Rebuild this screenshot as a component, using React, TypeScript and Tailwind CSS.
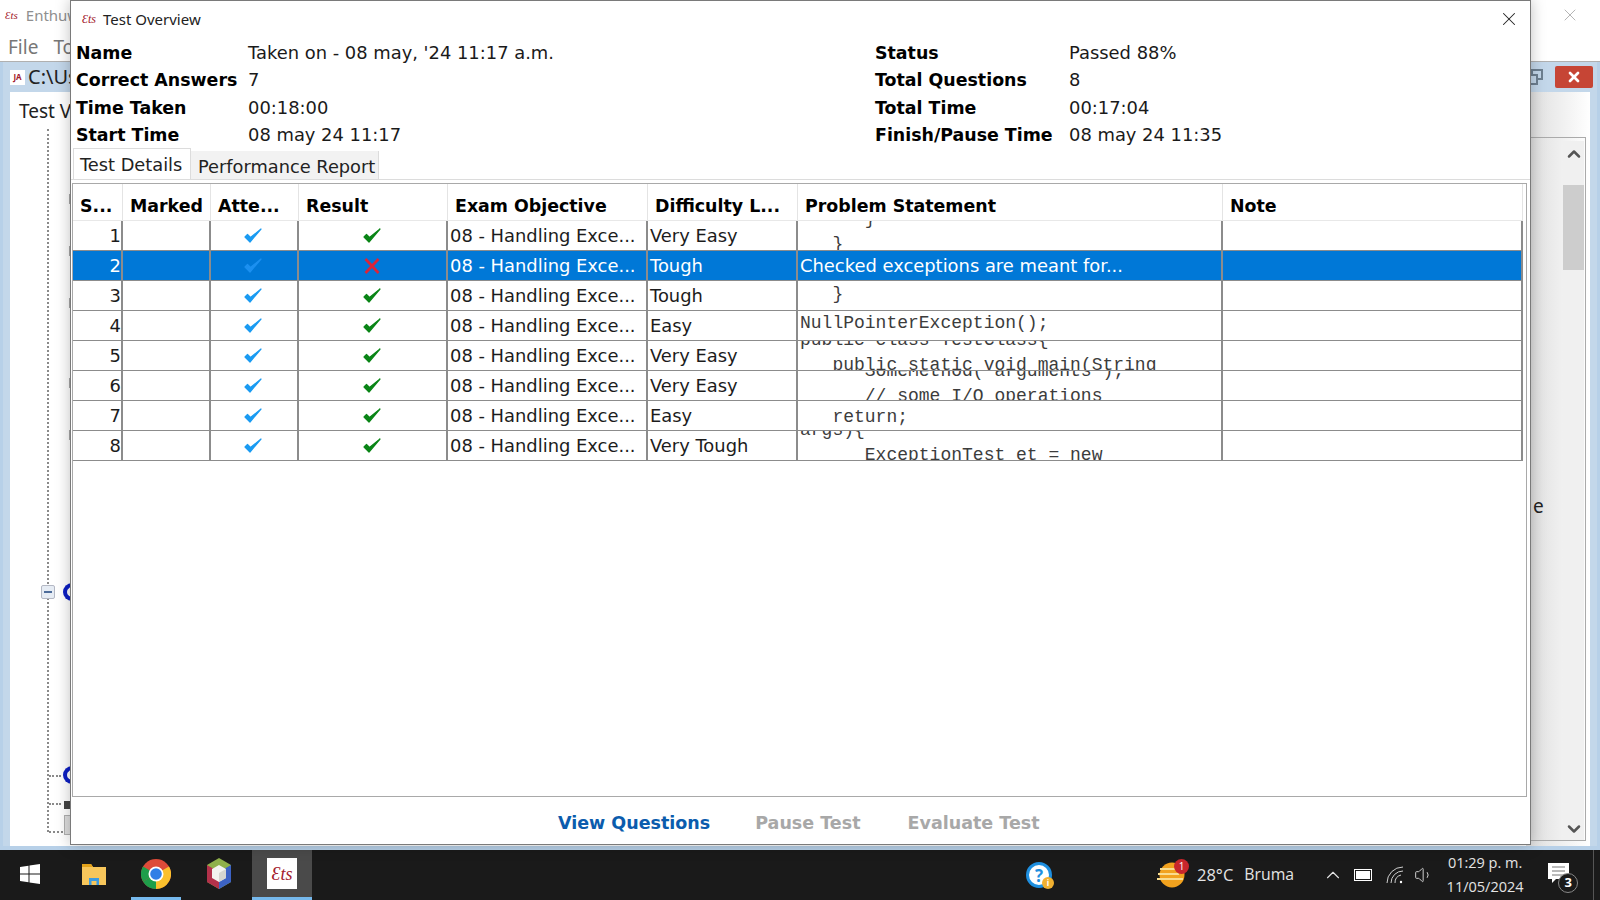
import { X, ChevronUp, ChevronDown, Volume1 } from 'lucide-react'

const COLS = 'grid grid-cols-[50px_88px_88px_149px_200px_150px_425px_300px]'

const headers = ['S...', 'Marked', 'Atte...', 'Result', 'Exam Objective', 'Difficulty L...', 'Problem Statement', 'Note']

type Row = {
  n: number
  difficulty: string
  offset: string
  code: string[]
  text?: string
  wrong?: boolean
}

const rows: Row[] = [
  { n: 1, difficulty: 'Very Easy', offset: '-mt-[14px]', code: ['      }', '   }'] },
  { n: 2, difficulty: 'Tough', offset: 'mt-0', code: [], text: 'Checked exceptions are meant for...', wrong: true },
  { n: 3, difficulty: 'Tough', offset: 'mt-[1px]', code: ['   }'] },
  { n: 4, difficulty: 'Easy', offset: 'mt-0', code: ['NullPointerException();'] },
  { n: 5, difficulty: 'Very Easy', offset: '-mt-[13px]', code: ['public class TestClass{', '   public static void main(String'] },
  { n: 6, difficulty: 'Very Easy', offset: '-mt-[12px]', code: ['      SomeMethod( arguments );', '      // some I/O operations'] },
  { n: 7, difficulty: 'Easy', offset: 'mt-[4px]', code: ['   return;'] },
  { n: 8, difficulty: 'Very Tough', offset: '-mt-[13px]', code: ['args){', '      ExceptionTest et = new'] },
]

const infoLeft = [
  ['Name', "Taken on - 08 may, '24 11:17 a.m."],
  ['Correct Answers', '7'],
  ['Time Taken', '00:18:00'],
  ['Start Time', '08 may 24 11:17'],
]

const infoRight = [
  ['Status', 'Passed 88%'],
  ['Total Questions', '8'],
  ['Total Time', '00:17:04'],
  ['Finish/Pause Time', '08 may 24 11:35'],
]

function Check({ color }: { color: string }) {
  return (
    <svg width="20" height="18" viewBox="0 0 20 18">
      <path d="M2 10 L7 15 L18 2 L7.5 10.5 L4.5 7.5 Z" fill={color} stroke={color} strokeWidth="1.2" strokeLinejoin="round" />
    </svg>
  )
}

function Cross() {
  return (
    <svg width="18" height="18" viewBox="0 0 18 18">
      <path d="M2.5 2 L15.5 16 M15.5 2 L2.5 16" stroke="#dc2438" strokeWidth="2.6" />
    </svg>
  )
}

function EtsMark({ className }: { className: string }) {
  return <span className={`font-['Liberation_Serif',serif] italic leading-none text-[#a3202c] ${className}`}>Ɛts</span>
}

function InfoBlock({ items, labelWidth }: { items: string[][]; labelWidth: string }) {
  return (
    <div className="flex flex-col">
      {items.map(([label, value]) => (
        <div key={label} className="flex h-[27.5px] items-center font-['DejaVu_Sans',sans-serif]">
          <div className={`${labelWidth} text-[17.4px] font-bold text-black`}>{label}</div>
          <div className="pt-[1px] text-[17.9px] text-[#1a1a1a]">{value}</div>
        </div>
      ))}
    </div>
  )
}

function TestTable() {
  return (
    <div className="ml-[1px] mr-[3px] h-[614px] border border-[#a9a9a9] bg-white pr-[3px] font-['DejaVu_Sans',sans-serif]">
      <div className={`${COLS} h-[37px] border-b border-[#e8e8e8]`}>
        {headers.map((h) => (
          <div key={h} className="flex items-center border-r border-[#e4e4e4] pl-[7px] pt-[8px] text-[17.4px] font-bold text-black">
            {h}
          </div>
        ))}
      </div>
      {rows.map((row) => {
        const cell = `flex items-center overflow-hidden border-r-2 border-[#8c8c8c] ${row.wrong ? 'text-white' : 'text-[#1c1c1c]'}`
        return (
          <div key={row.n} className={`${COLS} h-[30px] border-b border-[#8c8c8c] text-[17.9px] ${row.wrong ? 'bg-[#0078d7]' : 'bg-white'}`}>
            <div className={`${cell} justify-end pt-[2px]`}>{row.n}</div>
            <div className={cell} />
            <div className={`${cell} justify-center pr-[2px]`}>
              <Check color={row.wrong ? '#1c90f0' : '#1a9bf2'} />
            </div>
            <div className={`${cell} justify-center pr-[2px]`}>{row.wrong ? <Cross /> : <Check color="#0a8516" />}</div>
            <div className={`${cell} pl-[2px] pt-[2px]`}>08 - Handling Exce...</div>
            <div className={`${cell} pl-[2px] pt-[2px]`}>{row.difficulty}</div>
            <div className={`${cell} pl-[2px]`}>
              {row.text ? (
                <span className="pt-[1px]">{row.text}</span>
              ) : (
                <div className={`self-start ${row.offset} whitespace-pre font-['Liberation_Mono',monospace] text-[18px] leading-[25px] text-[#3c3c3c]`}>
                  {row.code.map((line) => (
                    <div key={line}>{line}</div>
                  ))}
                </div>
              )}
            </div>
            <div className={cell} />
          </div>
        )
      })}
    </div>
  )
}

function TestOverview() {
  return (
    <div className="absolute left-[70px] top-0 flex h-[845px] w-[1461px] flex-col border border-[#7a7a7a] bg-white shadow-[0_0_14px_rgba(0,0,0,0.25)]">
      <div className="flex h-[38px] items-center pb-[2px] pl-[11px] pr-[10px]">
        <EtsMark className="w-[21px] text-[12px]" />
        <span className="font-['Noto_Sans',sans-serif] text-[15px] text-[#222]">Test Overview</span>
        <X className="ml-auto h-[22px] w-[22px] text-[#222]" strokeWidth={1.1} />
      </div>
      <div className="flex h-[109px] pl-[5px]">
        <div className="w-[799px]">
          <InfoBlock items={infoLeft} labelWidth="w-[172px]" />
        </div>
        <InfoBlock items={infoRight} labelWidth="w-[194px]" />
      </div>
      <div className="flex h-[32px] items-end border-b border-[#dcdcdc] pl-[2px] font-['DejaVu_Sans',sans-serif] text-[17.8px]">
        <div className="flex h-[31px] w-[118px] items-center border border-b-0 border-[#dcdcdc] pl-[6px] pt-[3px] text-[#222]">Test Details</div>
        <div className="flex h-[28px] w-[188px] items-center border-r border-[#dcdcdc] bg-[#f2f2f2] pl-[7px] pt-[5px] text-[#222]">Performance Report</div>
      </div>
      <div className="pt-[3px]">
        <TestTable />
      </div>
      <div className="flex flex-1 items-center gap-[45px] pl-[487px] pt-[6px] font-['DejaVu_Sans',sans-serif] text-[17.5px] font-bold">
        <span className="text-[#0b5cad]">View Questions</span>
        <span className="text-[#a8a8a8]">Pause Test</span>
        <span className="ml-[2px] text-[#a8a8a8]">Evaluate Test</span>
      </div>
    </div>
  )
}

function TreeBackdrop() {
  return (
    <div className="relative ml-[37px] mt-[3px] h-[703px] w-[33px] border-l-2 border-dotted border-[#8a8a8a]">
      <div className="absolute -left-[8px] top-[456px] flex h-[14px] w-[14px] items-center justify-center rounded-[2px] border border-[#b4b8c4] bg-[#e6ecf4]">
        <div className="h-[2px] w-[8px] bg-[#4d6c9a]" />
      </div>
      <div className="absolute left-[14px] top-[454px] h-[18px] w-[9px] rounded-l-full border-[4px] border-r-0 border-[#0d1fc4]" />
      <div className="absolute left-[14px] top-[637px] h-[18px] w-[9px] rounded-l-full border-[4px] border-r-0 border-[#0d1fc4]" />
      <div className="absolute left-[0px] top-[646px] w-[12px] border-t-2 border-dotted border-[#8a8a8a]" />
      <div className="absolute left-[0px] top-[674px] w-[12px] border-t-2 border-dotted border-[#8a8a8a]" />
      <div className="absolute left-[0px] top-[702px] w-[14px] border-t-2 border-dotted border-[#8a8a8a]" />
      <div className="absolute left-[15px] top-[672px] h-[8px] w-[8px] bg-[#444]" />
      <div className="absolute left-[15px] top-[686px] h-[20px] w-[8px] border border-[#b0b0b0] bg-[#dedede]" />
      {[65, 117, 169, 249, 301].map((t) => (
        <div key={t} className="absolute left-[20px] h-[10px] w-[6px] border border-[#a8a8a8] bg-[#eee]" style={{ top: t }} />
      ))}
    </div>
  )
}

function AppBackdrop() {
  return (
    <div className="flex h-[850px] flex-col bg-white">
      <div className="flex h-[30px] shrink-0 items-center justify-between pl-[5px] pr-[20px] font-['Noto_Sans',sans-serif]">
        <div className="flex items-center gap-[8px]">
          <EtsMark className="text-[11px]" />
          <span className="text-[15px] text-[#8f8f8f]">Enthuware</span>
        </div>
        <X className="h-[20px] w-[20px] text-[#b5b5b5]" strokeWidth={1.2} />
      </div>
      <div className="flex h-[32px] shrink-0 items-center gap-[15px] border-b border-[#b0b0b0] pl-[8px] pt-[3px] font-['Noto_Sans',sans-serif] text-[19px] text-[#777]">
        <span>File</span>
        <span>Tools</span>
      </div>
      <div className="flex min-h-0 flex-1 flex-col border-x-[3px] border-b-[4px] border-[#b7d0e8] bg-[#c3d7ea] px-[7px]">
        <div className="flex h-[30px] shrink-0 items-center justify-between">
          <div className="flex items-center gap-[3px] font-['Noto_Sans',sans-serif] text-[20px] text-[#222]">
            <span className="flex h-[15px] w-[15px] items-center justify-center bg-white text-[8px] font-bold text-[#a3202c]">JA</span>
            <span>C:\Users</span>
          </div>
          <div className="-mr-[7px] flex items-center gap-[8px]">
            <svg width="22" height="22" viewBox="0 0 22 22" fill="none" stroke="#6d7f90" strokeWidth="2">
              <rect x="7" y="4" width="10" height="9" />
              <rect x="2" y="9" width="10" height="9" fill="#c3d7ea" />
            </svg>
            <div className="mr-[4px] flex h-[22px] w-[38px] items-center justify-center rounded-[2px] bg-[#c64535]">
              <X className="h-[16px] w-[16px] text-white" strokeWidth={4} />
            </div>
          </div>
        </div>
        <div className="flex min-h-0 flex-1 bg-white">
          <div className="flex-1">
            <div className="pl-[9px] pt-[5px] font-['Noto_Sans',sans-serif] text-[19px] text-[#222]">Test View</div>
            <TreeBackdrop />
          </div>
          <div className="flex w-[64px] items-start bg-gradient-to-r from-[#dddddd] to-white pt-[45px]">
            <div className="relative h-[704px] w-[60px] border-b border-r border-t border-[#aaaaaa] pl-[37px] pt-[3px]">
              <span className="absolute left-[7px] top-[354px] font-['Noto_Sans',sans-serif] text-[19px] text-[#222]">e</span>
              <div className="flex h-[699px] w-[21px] flex-col items-center bg-[#f0f0f0]">
                <ChevronUp className="mt-[3px] h-[20px] w-[20px] text-[#555]" strokeWidth={3} />
                <div className="mt-[21px] h-[85px] w-[21px] bg-[#cdcdcd]" />
                <ChevronDown className="mb-[1px] mt-auto h-[20px] w-[20px] text-[#555]" strokeWidth={3} />
              </div>
            </div>
          </div>
        </div>
      </div>
    </div>
  )
}

function TaskButton({ className, running, children }: { className: string; running?: boolean; children: React.ReactNode }) {
  return (
    <div className={`flex h-[50px] items-center justify-center border-b-[3px] ${className} ${running ? 'border-[#76b9ed]' : 'border-transparent'}`}>
      {children}
    </div>
  )
}

function Taskbar() {
  return (
    <div className="flex h-[50px] items-center bg-[#1a1a1a] font-['Open_Sans',sans-serif] text-[#e4e4e4]">
      <TaskButton className="w-[60px]">
        <svg width="20" height="20" viewBox="0 0 20 20" fill="#fff">
          <path d="M0 3 L8.5 1.8 V9.5 H0 Z M9.5 1.6 L20 0 V9.5 H9.5 Z M0 10.5 H8.5 V18.2 L0 17 Z M9.5 10.5 H20 V20 L9.5 18.4 Z" />
        </svg>
      </TaskButton>
      <TaskButton className="ml-[2px] w-[63px]">
        <svg width="26" height="26" viewBox="0 0 26 26">
          <path d="M1 3 H10 L12 6 H25 V24 H1 Z" fill="#f7c65b" />
          <path d="M1 3 H10 L12 6 H1 Z" fill="#e3a21a" />
          <path d="M8 17 H18 V24 H15.5 V20 H10.5 V24 H8 Z" fill="#3d9be0" />
        </svg>
      </TaskButton>
      <TaskButton className="ml-[6px] w-[50px]" running>
        <svg width="30" height="30" viewBox="0 0 30 30">
          <circle cx="15" cy="15" r="15" fill="#dd4b39" />
          <path d="M15 15 L2 22.5 A15 15 0 0 0 15 30 Z" fill="#1e9e4a" />
          <path d="M2 7.5 A15 15 0 0 0 2 22.5 L15 15 Z" fill="#1e9e4a" />
          <path d="M15 15 L28 7.5 A15 15 0 0 1 15 30 Z" fill="#fbc02d" />
          <circle cx="15" cy="15" r="7.5" fill="#fff" />
          <circle cx="15" cy="15" r="5.8" fill="#2f7fe6" />
        </svg>
      </TaskButton>
      <TaskButton className="ml-[7px] w-[62px]">
        <svg width="24" height="32" viewBox="0 0 24 32">
          <path d="M12 0 L24 7 V24 L12 31 L0 24 V7 Z" fill="#8fb04a" />
          <path d="M0 7 L12 14 V31 L0 24 Z" fill="#b3314a" />
          <path d="M24 7 L12 14 V31 L24 24 Z" fill="#3c62c4" />
          <path d="M12 7 L19 11 V20 L12 24 L5 20 V11 Z" fill="#f3f3ef" />
          <path d="M12 15 L19 11 V20 L12 24 Z" fill="#d6d6d0" />
        </svg>
      </TaskButton>
      <TaskButton className="ml-[2px] w-[60px] bg-[#4a4a4a]" running>
        <div className="flex h-[31px] w-[30px] items-center justify-center bg-white">
          <EtsMark className="text-[18px]" />
        </div>
      </TaskButton>
      <div className="ml-[712px] flex h-[30px] w-[30px] items-center justify-center">
        <div className="relative flex h-[26px] w-[26px] items-center justify-center rounded-full border-[3px] border-[#1e8fe0] bg-white text-[17px] font-bold leading-none text-[#1e8fe0]">
          ?
          <span className="absolute -bottom-[4px] -right-[5px] flex h-[12px] w-[12px] items-center justify-center rounded-full bg-[#f0b030] text-[8px] text-white">i</span>
        </div>
      </div>
      <div className="relative ml-[103px] h-[26px] w-[30px]">
        <svg width="30" height="26" viewBox="0 0 30 26">
          <circle cx="15" cy="13" r="12.5" fill="#f2a21e" />
          <path d="M3 6 H27 V8 H3 Z M1 11 H22 V13 H1 Z M0 16 H26 V18 H0 Z" fill="#f9dc8f" />
        </svg>
        <span className="absolute -right-[2px] -top-[3px] flex h-[15px] w-[15px] items-center justify-center rounded-full bg-[#c8262c] text-[10px] text-white">1</span>
      </div>
      <span className="ml-[10px] text-[16.5px]">28°C</span>
      <span className="ml-[11px] text-[15.8px]">Bruma</span>
      <ChevronUp className="ml-[28px] h-[22px] w-[22px]" strokeWidth={1.2} />
      <div className="ml-[10px] flex h-[12px] w-[18px] items-center border border-white p-[1px]">
        <div className="h-full w-full bg-white" />
      </div>
      <svg className="ml-[14px]" width="18" height="18" viewBox="0 0 18 18" fill="none" stroke="#cfcfcf" strokeWidth="1">
        <path d="M1 17 A16 16 0 0 1 17 1 M5 17 A12 12 0 0 1 17 5 M9 17 A8 8 0 0 1 15 9" />
        <circle cx="15" cy="16" r="1.2" fill="#fff" stroke="none" />
      </svg>
      <Volume1 className="ml-[10px] h-[20px] w-[20px] text-[#cfcfcf]" strokeWidth={1.2} />
      <div className="ml-[10px] flex w-[82px] flex-col items-center gap-[4px] text-[14.5px] leading-[20px]">
        <span>01:29 p. m.</span>
        <span>11/05/2024</span>
      </div>
      <div className="relative ml-[22px] h-[24px] w-[22px]">
        <svg width="22" height="24" viewBox="0 0 22 24">
          <path d="M0 0 H21 V16 H8 L4 20 V16 H0 Z" fill="#fff" />
          <path d="M4 4 H17 M4 8 H17 M4 12 H17" stroke="#777" strokeWidth="1" />
        </svg>
        <span className="absolute -bottom-[6px] -right-[8px] flex h-[20px] w-[20px] items-center justify-center rounded-full border border-[#888] bg-[#1a1a1a] text-[13px] font-bold text-white">3</span>
      </div>
      <div className="ml-auto mr-[6px] h-full w-px bg-[#555]" />
    </div>
  )
}

export default function App() {
  return (
    <div className="relative flex h-[900px] w-[1600px] flex-col overflow-hidden bg-white">
      <AppBackdrop />
      <Taskbar />
      <TestOverview />
    </div>
  )
}
